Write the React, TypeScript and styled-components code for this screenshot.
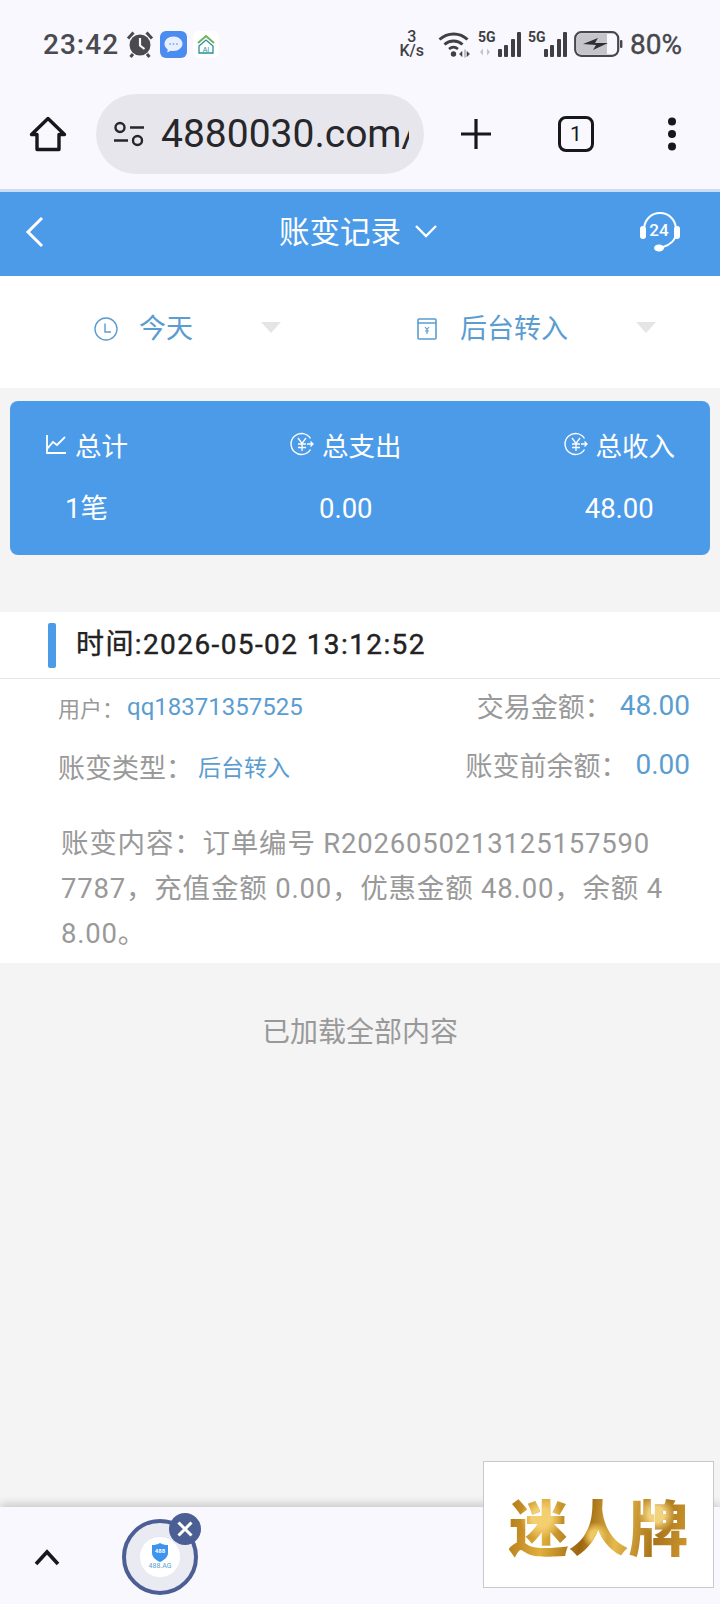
import React from 'react'
import styled, { createGlobalStyle } from 'styled-components'

const FONT = `Roboto, 'Noto Sans CJK SC', sans-serif`
const BLUE = '#4c9be9'
const LINK = '#5b9dd0'

function Main(): JSX.Element {
  return (
    <Page>
      <GlobalStyle />
      <Chrome>
        <StatusBar>
          <StatusLeft>
            <Clock>23:42</Clock>
            <AlarmIcon />
            <MessageIcon />
            <HomeAiIcon />
          </StatusLeft>
          <StatusRight>
            <Speed>
              <span>3</span>
              <span>K/s</span>
            </Speed>
            <WifiIcon />
            <Signal $dim />
            <Signal />
            <BatteryIcon />
            <Percent>80%</Percent>
          </StatusRight>
        </StatusBar>
        <Toolbar>
          <HomeIcon />
          <UrlPill>
            <TuneIcon />
            <UrlText>4880030.com/</UrlText>
          </UrlPill>
          <PlusIcon />
          <TabCount>1</TabCount>
          <MenuIcon />
        </Toolbar>
      </Chrome>

      <Header>
        <BackIcon />
        <Title>
          账变记录
          <TitleChevron />
        </Title>
        <SupportIcon />
      </Header>

      <FilterBar>
        <FilterItem>
          <ClockIcon />
          <FilterText>今天</FilterText>
          <Caret />
        </FilterItem>
        <FilterItem>
          <WalletIcon />
          <FilterText>后台转入</FilterText>
          <Caret />
        </FilterItem>
      </FilterBar>

      <SummaryCard>
        <SummaryColumn>
          <SummaryHead>
            <ChartIcon />
            总计
          </SummaryHead>
          <SummaryValue>1笔</SummaryValue>
        </SummaryColumn>
        <SummaryColumn>
          <SummaryHead>
            <YuanIcon />
            总支出
          </SummaryHead>
          <SummaryValue>0.00</SummaryValue>
        </SummaryColumn>
        <SummaryColumn>
          <SummaryHead>
            <YuanIcon />
            总收入
          </SummaryHead>
          <SummaryValue>48.00</SummaryValue>
        </SummaryColumn>
      </SummaryCard>

      <Record>
        <RecordHead>
          <Marker />
          <RecordTime>时间:2026-05-02 13:12:52</RecordTime>
        </RecordHead>
        <FirstRow>
          <LeftCell>
            <SmallLabel>用户：</SmallLabel>
            <UserLink>qq18371357525</UserLink>
          </LeftCell>
          <RightCell>
            <Label>交易金额：</Label>
            <Amount>48.00</Amount>
          </RightCell>
        </FirstRow>
        <SecondRow>
          <LeftCell>
            <Label>账变类型：</Label>
            <TypeLink>后台转入</TypeLink>
          </LeftCell>
          <RightCell>
            <Label>账变前余额：</Label>
            <Amount>0.00</Amount>
          </RightCell>
        </SecondRow>
        <Content>账变内容：订单编号 R20260502131251575907787，充值金额 0.00，优惠金额 48.00，余额 48.00。</Content>
      </Record>

      <LoadedAll>已加载全部内容</LoadedAll>

      <BottomBar>
        <UpIcon />
        <Bubble>
          <BubbleInner>
            <ShieldIcon />
            <BubbleCaption>488.AG</BubbleCaption>
          </BubbleInner>
          <CloseBadge>
            <CloseIcon />
          </CloseBadge>
        </Bubble>
        <AdBox>
          <AdText>迷人牌</AdText>
        </AdBox>
      </BottomBar>
    </Page>
  )
}

function AlarmIcon() {
  return (
    <svg width="28" height="28" viewBox="0 0 28 28">
      <circle cx="14" cy="15" r="10.500" fill="#4a4a4f" />
      <path d="M14 8v7.500l4.500 3.500" stroke="#f8f8fe" strokeWidth="2.200" fill="none" />
      <path d="M2 8.500 7.500 2.500M26 8.500 20.500 2.500M7 24l-2.500 3M21 24l2.500 3" stroke="#4a4a4f" strokeWidth="3" />
    </svg>
  )
}

function MessageIcon() {
  return (
    <svg width="27" height="27" viewBox="0 0 27 27">
      <rect width="27" height="27" rx="6" fill="#4a8cf0" />
      <path d="M13.500 5.500c-5 0-9 3.200-9 7.300 0 2.300 1.300 4.300 3.200 5.600l-.4 3 3.400-1.700c.9.200 1.800.3 2.800.3 5 0 9-3.200 9-7.200s-4-7.300-9-7.300z" fill="#e6f0fe" />
      <circle cx="10" cy="13" r="1" fill="#8db5ef" />
      <circle cx="13.500" cy="13" r="1" fill="#8db5ef" />
      <circle cx="17" cy="13" r="1" fill="#8db5ef" />
    </svg>
  )
}

function HomeAiIcon() {
  return (
    <svg width="26" height="27" viewBox="0 0 26 27">
      <rect width="26" height="27" rx="6" fill="#ffffff" />
      <path d="M5 12 13 5l8 7" stroke="#6fb35a" strokeWidth="2" fill="none" />
      <path d="M6 15 13 9l7 6v7H6z" stroke="#2a8f9c" strokeWidth="1.300" fill="none" />
      <text x="13" y="20.500" fontSize="7" fontFamily="Roboto" fill="#2a8f9c" textAnchor="middle">
        AI
      </text>
    </svg>
  )
}

function WifiIcon() {
  return (
    <svg width="33" height="28" viewBox="0 0 33 28">
      <path d="M1.500 9.500C9.500 2 22 2 29.500 9.500" stroke="#3f3f44" strokeWidth="3" fill="none" />
      <path d="M6.500 14.500c5-4.600 13-4.600 18 0" stroke="#3f3f44" strokeWidth="3" fill="none" />
      <path d="M11 19c2.800-2.400 6.200-2.400 9 0" stroke="#3f3f44" strokeWidth="2.600" fill="none" />
      <circle cx="15.500" cy="24" r="2.700" fill="#3f3f44" />
      <path d="M24 21.500 21.500 24l2.500 2.500zM27 19.500v8M29 21.500 31.500 24 29 26.500z" fill="#3f3f44" stroke="#3f3f44" strokeWidth=".6" />
    </svg>
  )
}

function BatteryIcon() {
  return (
    <svg width="49" height="26" viewBox="0 0 49 26">
      <rect x="1.200" y="1.200" width="43" height="23.600" rx="6" fill="#f8f8fe" stroke="#47474c" strokeWidth="2.200" />
      <path d="M3 7a4 4 0 0 1 4-4h26v20H7a4 4 0 0 1-4-4z" fill="#c4c4ca" />
      <path d="M9 13 24 7l-3 5h13l-15 7 3-5z" fill="#2e2e33" />
      <rect x="46" y="9" width="2.400" height="8" rx="1" fill="#47474c" />
    </svg>
  )
}

function HomeIcon() {
  return (
    <svg width="38" height="36" viewBox="0 0 38 36">
      <path d="M19 2.500 2.500 18.500H8v15h22v-15h5.500z" fill="none" stroke="#17171c" strokeWidth="3.400" strokeLinejoin="round" />
    </svg>
  )
}

function TuneIcon() {
  return (
    <svg width="32" height="28" viewBox="0 0 32 28">
      <circle cx="7" cy="7.500" r="4.500" fill="none" stroke="#26262b" strokeWidth="2.400" />
      <path d="M17 7.500h14M1 20.500h14" stroke="#26262b" strokeWidth="2.600" />
      <circle cx="24.500" cy="20.500" r="4.500" fill="none" stroke="#26262b" strokeWidth="2.400" />
    </svg>
  )
}

function PlusIcon() {
  return (
    <PlusSvg width="32" height="32" viewBox="0 0 32 32">
      <path d="M16 1v30M1 16h30" stroke="#17171c" strokeWidth="3.200" />
    </PlusSvg>
  )
}

function MenuIcon() {
  return (
    <MenuSvg width="10" height="34" viewBox="0 0 10 34">
      <circle cx="5" cy="4.500" r="4" fill="#17171c" />
      <circle cx="5" cy="17" r="4" fill="#17171c" />
      <circle cx="5" cy="29.500" r="4" fill="#17171c" />
    </MenuSvg>
  )
}

function BackIcon() {
  return (
    <svg width="20" height="32" viewBox="0 0 20 32">
      <path d="M17 2 3 16l14 14" stroke="#fff" strokeWidth="3" fill="none" />
    </svg>
  )
}

function TitleChevron() {
  return (
    <ChevronSvg width="24" height="15" viewBox="0 0 24 15">
      <path d="m2 2 10 10L22 2" stroke="#fff" strokeWidth="2.400" fill="none" />
    </ChevronSvg>
  )
}

function SupportIcon() {
  return (
    <svg width="44" height="44" viewBox="0 0 44 44">
      <path d="M6 20C6 10 13 3 22 3s16 7 16 17v3c0 7-6 12-13 14" stroke="#fff" strokeWidth="2" fill="none" />
      <rect x="2" y="16" width="6" height="13" rx="3" fill="#fff" />
      <rect x="36" y="16" width="6" height="13" rx="3" fill="#fff" />
      <ellipse cx="21" cy="38" rx="5" ry="3.500" fill="#fff" />
      <text x="21" y="26" fontSize="17" fontWeight="500" fontFamily="Roboto" fill="#fff" textAnchor="middle">
        24
      </text>
    </svg>
  )
}

function ClockIcon() {
  return (
    <svg width="24" height="24" viewBox="0 0 24 24">
      <circle cx="12" cy="12" r="11" fill="none" stroke={LINK} strokeWidth="1.400" />
      <path d="M11 6.500V15h6" fill="none" stroke={LINK} strokeWidth="1.400" />
    </svg>
  )
}

function WalletIcon() {
  return (
    <svg width="24" height="24" viewBox="0 0 24 24">
      <path d="M3 3a1 1 0 0 1 1-1h16a1 1 0 0 1 1 1v18a1 1 0 0 1-1 1H4a1 1 0 0 1-1-1zM3 6h18" fill="none" stroke={LINK} strokeWidth="1.600" />
      <path d="m10 10 2 2.500 2-2.500M12 12.500V17M10 14h4" fill="none" stroke={LINK} strokeWidth="1.200" />
    </svg>
  )
}

function ChartIcon() {
  return (
    <svg width="22" height="22" viewBox="0 0 22 22">
      <path d="M2 2v18h19" fill="none" stroke="#fff" strokeWidth="1.800" />
      <path d="m2 16 6-7 4 3 8-8" fill="none" stroke="#fff" strokeWidth="1.800" />
    </svg>
  )
}

function YuanIcon() {
  return (
    <svg width="24" height="24" viewBox="0 0 24 24">
      <path d="M20.500 6.500A10.500 10.500 0 1 0 20.500 17.500" fill="none" stroke="#fff" strokeWidth="1.400" />
      <path d="m8 6 4 5.500L16 6M12 11.500V19M8 12h8M8 15.500h8" fill="none" stroke="#fff" strokeWidth="1.300" />
      <path d="M17 12h6m-2.500-2.500L23 12l-2.500 2.500" fill="none" stroke="#fff" strokeWidth="1.300" />
    </svg>
  )
}

function UpIcon() {
  return (
    <UpSvg width="26" height="18" viewBox="0 0 26 18">
      <path d="m2 16 11-12 11 12" stroke="#17171c" strokeWidth="3.600" fill="none" />
    </UpSvg>
  )
}

function ShieldIcon() {
  return (
    <svg width="16" height="19" viewBox="0 0 16 19">
      <path d="M8 0c2.500 1.500 5 2 8 2v8c0 4-3.500 7-8 9-4.500-2-8-5-8-9V2c3 0 5.500-.5 8-2z" fill="#3d94ee" />
      <text x="8" y="10" fontSize="6" fontWeight="700" fontFamily="Roboto" fill="#fff" textAnchor="middle">
        488
      </text>
    </svg>
  )
}

function CloseIcon() {
  return (
    <svg width="16" height="16" viewBox="0 0 16 16">
      <path d="m1.500 1.500 13 13M14.500 1.500l-13 13" stroke="#fff" strokeWidth="3" />
    </svg>
  )
}

const GlobalStyle = createGlobalStyle`
  html, body {
    margin: 0;
    padding: 0;
    background: #f4f4f5;
    font-family: ${FONT};
  }
  * {
    box-sizing: border-box;
  }
  svg {
    flex: none;
    display: block;
  }
`

const Page = styled.div`
  width: 720px;
  height: 1604px;
  display: flex;
  flex-direction: column;
  background: #f4f4f5;
  overflow: hidden;
`

const Chrome = styled.div`
  height: 192px;
  background: #f8f8fe;
  border-bottom: 3px solid #c9dff5;
`

const StatusBar = styled.div`
  height: 88px;
  padding: 0 38px 0 43px;
  display: flex;
  align-items: center;
  justify-content: space-between;
`

const StatusLeft = styled.div`
  display: flex;
  align-items: center;
  gap: 6px;
`

const Clock = styled.span`
  font-size: 28px;
  font-weight: 500;
  letter-spacing: 1px;
  color: #4a4a4f;
  margin-right: 1px;
`

const StatusRight = styled.div`
  display: flex;
  align-items: center;
  gap: 7px;
`

const Speed = styled.span`
  display: flex;
  flex-direction: column;
  align-items: center;
  font-size: 16px;
  line-height: 14px;
  font-weight: 500;
  color: #3f3f44;
  margin-right: 7px;
`

const Percent = styled.span`
  font-size: 28px;
  color: #47474c;
  -webkit-text-stroke: 0.4px #47474c;
`

const SignalBox = styled.div<{ $wide: boolean }>`
  width: ${p => (p.$wide ? 43 : 39)}px;
  height: 26px;
  position: relative;
  display: flex;
  align-items: flex-end;
  justify-content: flex-end;
  gap: 2.5px;
`

const SignalTag = styled.span`
  position: absolute;
  left: 0;
  top: -1px;
  font-size: 14px;
  line-height: 15px;
  font-weight: 700;
  color: #3f3f44;
`

const SignalBar = styled.i<{ $h: number }>`
  display: block;
  width: 4px;
  height: ${p => p.$h}px;
  border-radius: 1px;
  background: #3f3f44;
`

const SignalDim = styled.svg`
  position: absolute;
  left: 0;
  bottom: 0;
`

function Signal({ $dim }: { $dim?: boolean }) {
  return (
    <SignalBox $wide={!!$dim}>
      <SignalTag>5G</SignalTag>
      {$dim && (
        <SignalDim width="14" height="10" viewBox="0 0 14 10">
          <path d="M5 1.500 2 5l3 3.500zM7 0v10M9 1.500 12 5 9 8.500z" fill="#c4c4ca" />
        </SignalDim>
      )}
      {[8, 12, 18, 25].map(h => (
        <SignalBar key={h} $h={h} />
      ))}
    </SignalBox>
  )
}

const Toolbar = styled.div`
  height: 92px;
  padding: 0 0 0 29px;
  display: flex;
  align-items: center;
`

const UrlPill = styled.div`
  width: 328px;
  height: 80px;
  margin-left: 29px;
  padding: 0 15px 0 17px;
  border-radius: 40px;
  background: #e6e6ec;
  display: flex;
  align-items: center;
  gap: 16px;
  overflow: hidden;
`

const UrlText = styled.span`
  flex: 1;
  overflow: hidden;
  white-space: nowrap;
  font-size: 39px;
  color: #26262b;
`

const PlusSvg = styled.svg`
  margin-left: 36px;
`

const TabCount = styled.span`
  width: 36px;
  height: 36px;
  margin-left: 66px;
  border: 3.5px solid #17171c;
  border-radius: 8px;
  display: flex;
  align-items: center;
  justify-content: center;
  font-size: 21px;
  color: #17171c;
`

const MenuSvg = styled.svg`
  margin-left: 73px;
`

const Header = styled.div`
  height: 84px;
  padding: 0 38px 4px 25px;
  background: ${BLUE};
  display: flex;
  align-items: center;
  justify-content: space-between;
`

const Title = styled.div`
  display: flex;
  align-items: center;
  gap: 13px;
  margin-left: 34px;
  margin-top: -4px;
  font-size: 30.5px;
  color: #fff;
`

const ChevronSvg = styled.svg`
  margin-top: 2px;
`

const FilterBar = styled.div`
  height: 112px;
  padding: 0 0 6px 94px;
  background: #fff;
  display: flex;
  align-items: center;
  gap: 134px;
`

const FilterItem = styled.div`
  display: flex;
  align-items: center;
  gap: 21px;
`

const FilterText = styled.span`
  margin-top: -6px;
  font-size: 27px;
  color: ${LINK};
`

const Caret = styled.i`
  width: 0;
  height: 0;
  margin-left: 47px;
  margin-bottom: 4px;
  border-left: 10px solid transparent;
  border-right: 10px solid transparent;
  border-top: 11px solid #e5e5e5;
`

const SummaryCard = styled.div`
  height: 154px;
  margin: 13px 10px 0;
  padding: 24px 35px 0 35px;
  border-radius: 8px;
  background: ${BLUE};
  display: flex;
  justify-content: space-between;
  color: #fff;
`

const SummaryColumn = styled.div`
  display: flex;
  flex-direction: column;
  align-items: center;
  gap: 27px;
`

const SummaryHead = styled.div`
  display: flex;
  align-items: center;
  gap: 8px;
  height: 38px;
  font-size: 26.5px;
`

const SummaryValue = styled.div`
  height: 38px;
  line-height: 38px;
  font-size: 27.5px;
`

const Record = styled.div`
  height: 351px;
  margin-top: 57px;
  background: #fff;
  display: flex;
  flex-direction: column;
`

const RecordHead = styled.div`
  height: 67px;
  padding-left: 48px;
  border-bottom: 1px solid #e6e6e6;
  display: flex;
  align-items: center;
  gap: 20px;
`

const Marker = styled.i`
  width: 8px;
  height: 45px;
  border-radius: 2px;
  background: ${BLUE};
`

const RecordTime = styled.span`
  margin-top: -6px;
  font-size: 28px;
  letter-spacing: 1.4px;
  color: #222;
  -webkit-text-stroke: 0.4px #222;
`

const InfoRow = styled.div`
  padding: 0 30px 0 58px;
  display: flex;
  justify-content: space-between;
  align-items: center;
`

const FirstRow = styled(InfoRow)`
  margin-top: 6px;
  height: 44px;
`

const SecondRow = styled(InfoRow)`
  margin-top: 13px;
  height: 48px;
`

const LeftCell = styled.div`
  display: flex;
  align-items: center;
`

const RightCell = styled.div`
  display: flex;
  align-items: center;
  gap: 8px;
  margin-top: -4px;
`

const Label = styled.span`
  font-size: 27px;
  color: #999;
`

const SmallLabel = styled.span`
  font-size: 22px;
  color: #999;
`

const UserLink = styled.span`
  margin-left: 3px;
  font-size: 24px;
  color: ${LINK};
`

const TypeLink = styled.span`
  margin-left: 5px;
  font-size: 23px;
  color: ${LINK};
`

const Amount = styled.span`
  font-size: 28px;
  color: ${LINK};
`

const Content = styled.div`
  width: 603px;
  margin: 31px 0 0 61px;
  font-size: 27.5px;
  letter-spacing: 0.8px;
  line-height: 45px;
  color: #999;
  word-break: break-all;
`

const LoadedAll = styled.div`
  margin-top: 48px;
  text-align: center;
  font-size: 28px;
  line-height: 44px;
  color: #999;
`

const BottomBar = styled.div`
  position: relative;
  margin-top: auto;
  height: 97px;
  padding-left: 34px;
  background: #f8f8fe;
  box-shadow: 0 -3px 9px rgba(0, 0, 0, 0.18);
  display: flex;
  align-items: center;
  gap: 62px;
`

const UpSvg = styled.svg`
  margin-top: 2px;
`

const Bubble = styled.div`
  position: relative;
  width: 76px;
  height: 76px;
  margin-top: 2px;
  border: 4px solid #4b5f94;
  border-radius: 50%;
  background: #eaeaf3;
  display: flex;
  align-items: center;
  justify-content: center;
`

const BubbleInner = styled.div`
  width: 40px;
  height: 40px;
  border-radius: 50%;
  background: #fff;
  display: flex;
  flex-direction: column;
  align-items: center;
  justify-content: center;
`

const BubbleCaption = styled.span`
  font-size: 7px;
  line-height: 9px;
  color: #5b9dd0;
`

const CloseBadge = styled.div`
  position: absolute;
  top: -10px;
  right: -7px;
  width: 32px;
  height: 32px;
  border-radius: 50%;
  background: #4b5f94;
  display: flex;
  align-items: center;
  justify-content: center;
`

const AdBox = styled.div`
  position: absolute;
  left: 483px;
  top: -46px;
  width: 231px;
  height: 127px;
  border: 1px solid #c9c9cc;
  background: #fff;
  display: flex;
  align-items: center;
  justify-content: center;
`

const AdText = styled.span`
  font-family: 'Noto Sans CJK SC', sans-serif;
  font-size: 60px;
  line-height: 70px;
  font-weight: 900;
  background:
    radial-gradient(circle at 18% 40%, #f3cf70 0 6%, transparent 14%),
    radial-gradient(circle at 48% 65%, #f0c860 0 5%, transparent 13%),
    radial-gradient(circle at 82% 35%, #f3d27c 0 5%, transparent 12%),
    linear-gradient(100deg, #b07614 0%, #e0ae3c 22%, #9c660f 42%, #e6b94c 60%, #a9741a 80%, #d09a30 100%);
  -webkit-background-clip: text;
  background-clip: text;
  color: transparent;
`

export default Main
